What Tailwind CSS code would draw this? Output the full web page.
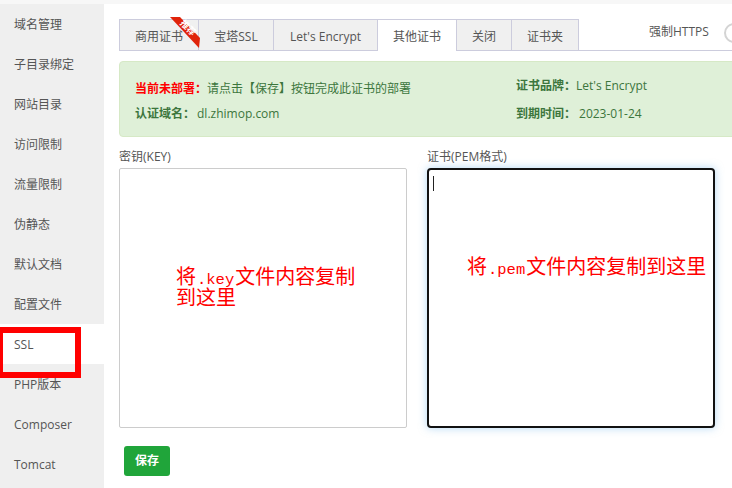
<!DOCTYPE html>
<html lang="en">
<head>
    <meta charset="UTF-8">
    <title>SSL</title>
    <script src="https://cdn.jsdelivr.net/npm/@tailwindcss/browser@4"></script>
</head>
<body class="bg-white">
    <div class="relative w-[732px] h-[488px] overflow-hidden text-[12px] text-[#555] font-['Open_Sans','Noto_Sans_CJK_SC',sans-serif]">
        <div class="h-[4px] bg-[#f7f7f7]"></div>
        <div class="flex">
            <!-- Sidebar -->
            <ul class="w-[104px] h-[484px] shrink-0 bg-[#efefef]">
                <li class="h-10 leading-[42px] pl-[14px]">域名管理</li>
                <li class="h-10 leading-[42px] pl-[14px]">子目录绑定</li>
                <li class="h-10 leading-[42px] pl-[14px]">网站目录</li>
                <li class="h-10 leading-[42px] pl-[14px]">访问限制</li>
                <li class="h-10 leading-[42px] pl-[14px]">流量限制</li>
                <li class="h-10 leading-[42px] pl-[14px]">伪静态</li>
                <li class="h-10 leading-[42px] pl-[14px]">默认文档</li>
                <li class="h-10 leading-[42px] pl-[14px]">配置文件</li>
                <li class="h-10 leading-[42px] pl-[14px] bg-white">SSL</li>
                <li class="h-10 leading-[42px] pl-[14px]">PHP版本</li>
                <li class="h-10 leading-[42px] pl-[14px]">Composer</li>
                <li class="h-10 leading-[42px] pl-[14px]">Tomcat</li>
            </ul>

            <div class="flex-1 min-w-0 pl-[15px] pt-[15px]">
                <!-- Tabs -->
                <div class="relative w-[640px] h-[32px] flex items-start border-b border-[#ccd]">
                    <div class="relative flex h-[32px] shrink-0 border-l border-[#ccd]">
                        <span class="w-[79px] flex items-center justify-center pt-[3px] bg-[#f0f0f0] border-t border-r border-b border-[#ccd]">商用证书</span>
                        <span class="w-[75px] flex items-center justify-center pt-[3px] bg-[#f0f0f0] border-t border-r border-b border-[#ccd]">宝塔SSL</span>
                        <span class="w-[104px] flex items-center justify-center pt-[3px] bg-[#f0f0f0] border-t border-r border-b border-[#ccd]">Let's Encrypt</span>
                        <span class="w-[79px] flex items-center justify-center pt-[3px] bg-white border-t border-r border-[#ccd]">其他证书</span>
                        <span class="w-[55px] flex items-center justify-center pt-[3px] bg-[#f0f0f0] border-t border-r border-b border-[#ccd]">关闭</span>
                        <span class="w-[67px] flex items-center justify-center pt-[3px] bg-[#f0f0f0] border-t border-r border-b border-[#ccd]">证书夹</span>
                    </div>
                    <span class="ml-[70px] mt-[4px] leading-[18px] whitespace-nowrap">强制HTTPS</span>
                    <span class="ml-[15px] mt-[4px] w-[40px] h-[20px] shrink-0 rounded-full border-2 border-[#d4d4d4] bg-white"></span>
                    <!-- Ribbon -->
                    <svg class="absolute left-[51px] top-[-2px]" width="32" height="32" viewBox="0 0 32 32">
                        <polygon points="0,0 10,0 30,21 29,31" fill="#e0230a"/>
                        <text x="18" y="14" fill="#fff" font-size="9" font-weight="700" text-anchor="middle" transform="rotate(45 18 11)">推荐</text>
                    </svg>
                </div>

                <!-- Status box -->
                <div class="mt-[10px] w-[640px] h-[76px] rounded-[4px] border border-[#d6e9c6] bg-[#dff0d8] text-[#3c763d] pl-[15px] flex">
                    <div class="w-[381px] shrink-0 pt-[13px]">
                        <p class="h-[27px] leading-[27px]"><b class="text-[#ff0000]">当前未部署：</b>请点击【保存】按钮完成此证书的部署</p>
                        <p class="h-[23px] leading-[23px]"><b>认证域名：</b><span class="ml-[2px]">dl.zhimop.com</span></p>
                    </div>
                    <div class="pt-[10px]">
                        <p class="h-[28px] leading-[28px]"><b>证书品牌：</b>Let's Encrypt</p>
                        <p class="h-[28px] leading-[28px]"><b>到期时间：</b><span class="ml-[3px]">2023-01-24</span></p>
                    </div>
                </div>

                <!-- Key and certificate -->
                <div class="flex gap-[20px] mt-[10px]">
                    <div class="w-[288px]">
                        <label class="block h-[21px] leading-[20px]">密钥(KEY)</label>
                        <div class="relative h-[260px] border border-[#ccc] rounded-[2px] bg-white">
                            <div class="absolute left-[56px] top-[100px] w-[190px] text-[20px] leading-[20px] text-[#ff0000] font-['Liberation_Mono','Noto_Sans_CJK_SC',monospace]">将<span class="mx-px text-[15.5px] leading-[20px]">.key</span>文件内容复制到这里</div>
                        </div>
                    </div>
                    <div class="w-[288px]">
                        <label class="block h-[21px] leading-[20px]">证书(PEM格式)</label>
                        <div class="relative h-[260px] border-2 border-[#111] rounded-[4px] bg-white shadow-[0_0_8px_rgba(102,175,233,0.5)]">
                            <span class="absolute left-[4px] top-[6px] w-px h-[15px] bg-[#222]"></span>
                            <div class="absolute left-[38px] top-[89px] whitespace-nowrap text-[20px] leading-[20px] text-[#ff0000] font-['Liberation_Mono','Noto_Sans_CJK_SC',monospace]">将<span class="mx-px text-[15.5px] leading-[20px]">.pem</span>文件内容复制到这里</div>
                        </div>
                    </div>
                </div>

                <button class="mt-[18px] ml-[5px] w-[46px] h-[30px] rounded-[3px] bg-[#20a53a] text-white font-bold">保存</button>
            </div>
        </div>

        <!-- Red annotation round the SSL item -->
        <div class="absolute left-0 top-[327px] w-[81px] h-[51px] border-[#ff0000] border-t-[6px] border-r-[6px] border-b-[6px] border-l-[3px]"></div>
    </div>
</body>
</html>
